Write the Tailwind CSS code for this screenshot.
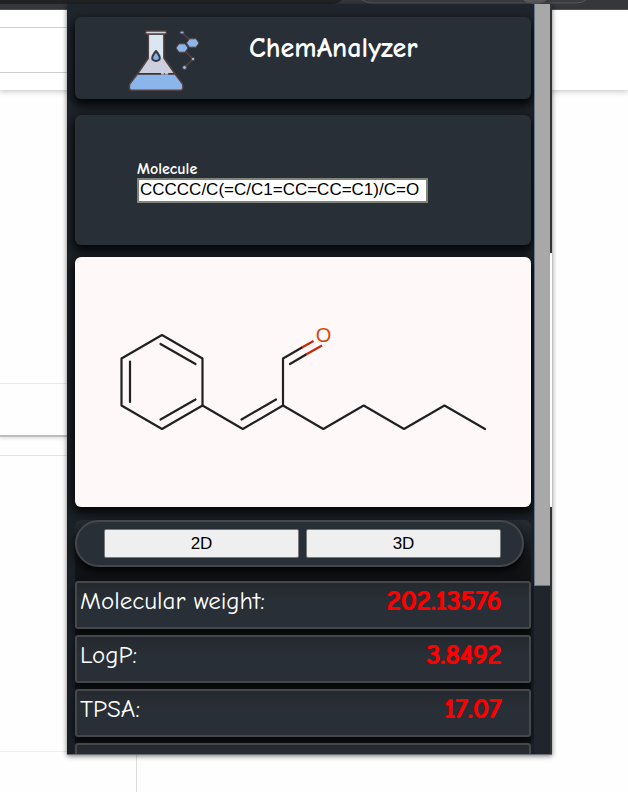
<!DOCTYPE html>
<html lang="en">
<head>
<meta charset="utf-8">
<meta name="viewport" content="width=device-width, initial-scale=1">
<title>ChemAnalyzer</title>
<script src="https://cdn.jsdelivr.net/npm/@tailwindcss/browser@4"></script>
</head>
<body class="relative h-screen overflow-hidden bg-[#fefefe] font-['Comic_Sans_MS','Comic_Neue','Open_Sans',sans-serif] text-white">

<!-- Page behind the popup -->
<div class="flex h-full flex-col" aria-hidden="true">
  <div class="h-[10px] shrink-0 border-b border-[#55565b] bg-[#36373b]">
    <svg class="block h-[9px] w-full" viewBox="0 0 628 9" preserveAspectRatio="none">
      <path d="M0 0H342Q338 4 331 4H0Z" fill="#222224"/>
      <path d="M362 0Q366 3 373 3H576Q582 3 586 0" fill="#3b3c40" stroke="#58585b"/>
      <path d="M523 0Q528 4 535 4T547 0Z" fill="#5b5b5e"/>
    </svg>
  </div>
  <div class="flex h-[80px] shrink-0 flex-col bg-white shadow-[0_2px_5px_rgba(0,0,0,0.2)]">
    <div class="mt-[17px] h-[46px] w-[67px] border-y border-[#cfcfcf]"></div>
  </div>
  <div class="flex w-[67px] flex-1 flex-col">
    <div class="h-[294px] border-b border-[#ebebeb]"></div>
    <div class="h-[53px] border-b-2 border-[#bdbdc0] shadow-[0_2px_3px_rgba(0,0,0,0.1)]"></div>
    <div class="h-[19px] border-b border-[#e2e2e2]"></div>
    <div class="h-[296px] border-b border-[#eeeeee]"></div>
  </div>
  <div class="h-[40px] w-[137px] shrink-0 border-r border-[#dddddd]"></div>
</div>

<!-- Popup -->
<main class="absolute top-1 right-[76px] bottom-[37px] left-[67px] flex overflow-hidden border-b border-[#6b6d70] bg-[#20252d] shadow-[0_1px_5px_rgba(0,0,0,0.55)]">
  <div class="flex min-w-0 flex-1 flex-col overflow-hidden bg-linear-to-b from-[#20252d] via-[#1c2125] to-[#1b2027] pt-[13px] pr-[3px] pl-2">

    <header class="flex h-[82px] shrink-0 rounded-md bg-[#292f36] pl-[50px] shadow-[0_5px_10px_2px_rgba(0,0,0,0.85)]">
      <svg class="mt-[11px] h-[66px] w-[80px] shrink-0" viewBox="125 28 80 66" role="img" aria-label="Flask logo">
        <g stroke="#57423f" stroke-width="1.4" stroke-linejoin="round">
          <!-- glass -->
          <path d="M148.500 34V58L137.500 74H175L163.800 58V34Z" fill="#ccd0de"/>
          <path d="M149.300 35H163V58H149.300Z" fill="#dbe7f0" stroke="none"/>
          <rect x="145.500" y="31" width="21" height="3" rx="1.500" fill="#cfd7e0"/>
          <!-- liquid -->
          <path d="M137.500 74L129.800 84Q128.500 90.300 131.500 90.300H180.500Q183.800 90.300 182.500 84L175 74Z" fill="#8ab6ec"/>
          <path d="M137.500 73.600H161M169 73.600H174.500" stroke="#3d3336"/>
          <path d="M161 73.700H169" stroke="#a9cdf5" stroke-dasharray="3 1"/>
          <path d="M156 51Q151 57 152.500 59.500Q156 62.500 159.500 59.500Q161 57 156 51Z" fill="#7fb0e8" stroke="#38373f" stroke-width="2"/>
        </g>
        <path d="M182 32.500L193 43L182 48L193 59L184.500 67.500" fill="none" stroke="#57403f" stroke-width="1.500"/>
        <g fill="#8ab6ec" stroke="#57423f" stroke-width="1">
          <path d="M176 48L179 43.800H185L188 48L185 52.200H179Z"/>
          <path d="M186.500 43L189.500 38.800H196L199 43L196 47.200H189.500Z"/>
          <ellipse cx="182" cy="32.500" rx="2" ry="1.500"/>
          <circle cx="193" cy="59" r="1.700"/>
          <circle cx="184.500" cy="67.500" r="2"/>
        </g>
      </svg>
      <h1 class="mt-[13px] ml-[44px] text-[28px] leading-9 font-bold">ChemAnalyzer</h1>
    </header>

    <section class="mt-4 flex h-[130px] shrink-0 flex-col rounded-md bg-[#292f36] pt-[45px] pr-[103px] pl-[62px] shadow-[0_4px_10px_2px_rgba(0,0,0,0.85)]">
      <label for="molecule" class="text-base leading-[18px] font-bold">Molecule</label>
      <input id="molecule" type="text" value="CCCCC/C(=C/C1=CC=CC=C1)/C=O" class="h-[25px] w-full border-2 border-[#80857b] bg-white px-px pb-px font-['Liberation_Sans',Arial,sans-serif] text-[17px] leading-5 text-black">
    </section>

    <figure class="mt-3 shrink-0 rounded-md bg-[#fff8f8] shadow-[0_4px_10px_2px_rgba(0,0,0,0.85)]">
      <svg class="block h-[250px] w-full" viewBox="75 257 456 250" role="img" aria-label="Molecular structure">
        <g fill="none" stroke="#202124" stroke-width="2.200" stroke-linecap="round" stroke-linejoin="round">
          <path d="M162 335L202.500 358.500V405.500L162 429L121.500 405.500V358.500Z"/>
          <path d="M160.500 344L195.500 364M195.500 399.500L160.500 419.500M130 402V361.500"/>
          <path d="M202.500 405.500L242.800 429L283 405.500L323.300 429L363.700 405.500L404 429L444.500 405.500L485 429"/>
          <path d="M241.500 419.500L276 399.500M283 405.500V358.500L302 347.500M290 364L306 354.500"/>
          <path stroke="#c62a08" stroke-linecap="butt" d="M302 347.500L313.500 341M306 354.500L322 345.500"/>
        </g>
        <text x="323.500" y="342" text-anchor="middle" font-family="Liberation Sans, Arial, sans-serif" font-size="20" fill="#cf4a12">O</text>
      </svg>
    </figure>

    <section class="mt-[13px] flex min-h-0 flex-1 flex-col rounded-t-md bg-linear-to-b from-[#242b34] via-[#111315] via-20% to-[#0f1114]">
      <div class="mr-[7px] flex h-[47px] shrink-0 items-center gap-[7px] rounded-full border-2 border-[#47474b] bg-[#292f36] pr-[21px] pl-[27px] shadow-[0_5px_9px_rgba(0,0,0,0.85)]">
        <button type="button" class="h-[29px] flex-1 rounded-[2px] border border-[#77797c] bg-[#efefef] font-['Liberation_Sans',Arial,sans-serif] text-[17px] leading-5 text-black">2D</button>
        <button type="button" class="h-[29px] flex-1 rounded-[2px] border border-[#77797c] bg-[#efefef] font-['Liberation_Sans',Arial,sans-serif] text-[17px] leading-5 text-black">3D</button>
      </div>

      <dl class="mt-[14px] flex flex-col gap-[6px] text-[25px] leading-9">
        <div class="flex h-12 shrink-0 justify-between rounded-[3px] border-2 border-[#47474b] bg-linear-to-b from-[#25292f] to-[#292f36] to-40% pr-7 pl-[3px] shadow-[0_4px_9px_rgba(0,0,0,0.7)]">
          <dt>Molecular weight:</dt>
          <dd class="text-[28px] font-bold text-[#ff0000] text-shadow-[1px_0_0_#ff0000]">202.13576</dd>
        </div>
        <div class="flex h-12 shrink-0 justify-between rounded-[3px] border-2 border-[#47474b] bg-linear-to-b from-[#25292f] to-[#292f36] to-40% pr-7 pl-[3px] shadow-[0_4px_9px_rgba(0,0,0,0.7)]">
          <dt>LogP:</dt>
          <dd class="text-[28px] font-bold text-[#ff0000] text-shadow-[1px_0_0_#ff0000]">3.8492</dd>
        </div>
        <div class="flex h-12 shrink-0 justify-between rounded-[3px] border-2 border-[#47474b] bg-linear-to-b from-[#25292f] to-[#292f36] to-40% pr-7 pl-[3px] shadow-[0_4px_9px_rgba(0,0,0,0.7)]">
          <dt>TPSA:</dt>
          <dd class="text-[28px] font-bold text-[#ff0000] text-shadow-[1px_0_0_#ff0000]">17.07</dd>
        </div>
        <div class="h-12 shrink-0 rounded-[3px] border-2 border-[#47474b] bg-linear-to-b from-[#25292f] to-[#292f36] to-40%"></div>
      </dl>
    </section>
  </div>

  <!-- Scrollbar -->
  <div class="flex w-[18px] shrink-0" aria-hidden="true">
    <div class="h-[582px] flex-1 border-l border-b border-[#68758a] bg-[#a8a8a8]"></div>
    <div class="flex w-[2px] flex-col bg-[#303236]">
      <div class="mt-[249px] h-[254px] bg-white"></div>
    </div>
  </div>
</main>
</body>
</html>
